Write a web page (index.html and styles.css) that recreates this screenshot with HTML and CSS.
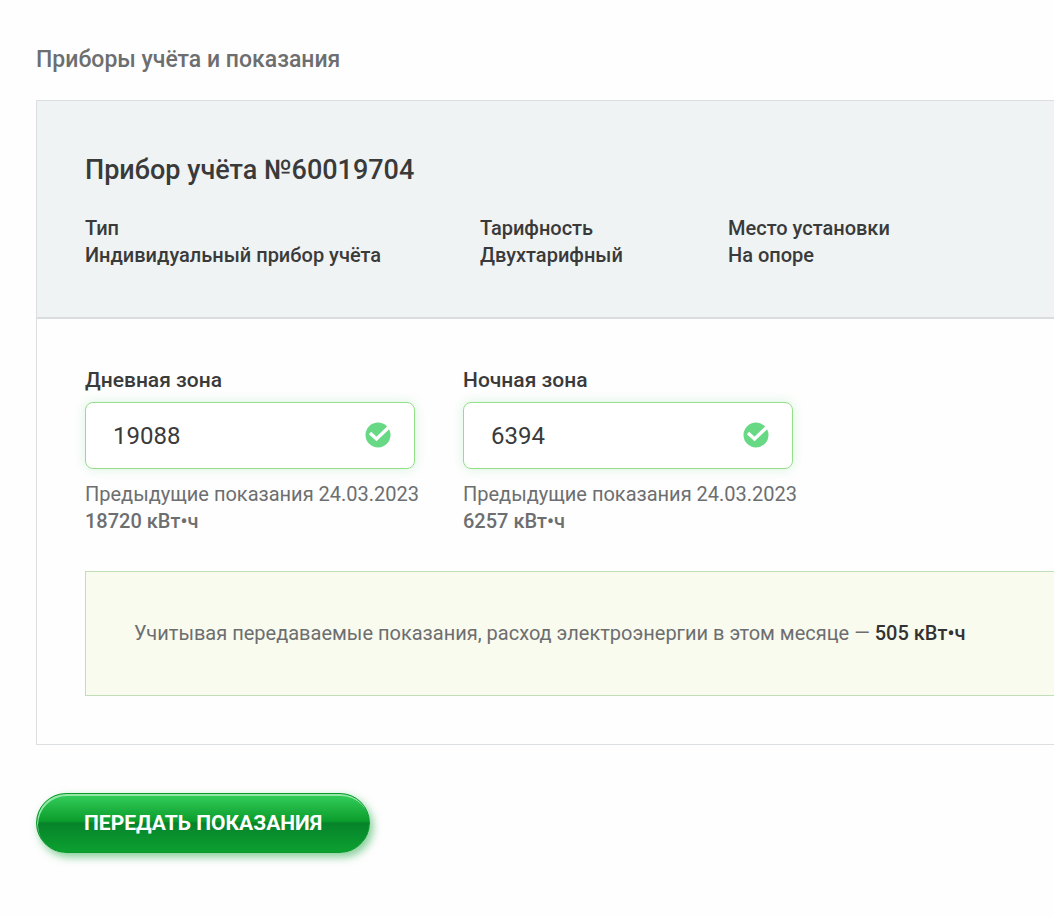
FILE: index.html
```html
<!DOCTYPE html>
<html lang="ru">
  <head>
    <meta charset="UTF-8" />
    <meta name="viewport" content="width=device-width, initial-scale=1.0" />
    <title>Приборы учёта и показания</title>
    <link rel="stylesheet" href="styles.css">
  </head>
  <body>
    <form class="readings-form">
      <h2 class="page-title">Приборы учёта и показания</h2>

      <section class="meter">
        <!-- Meter info -->
        <div class="meter-header">
          <h3 class="meter-title">Прибор учёта №60019704</h3>
          <dl class="meter-info">
            <div>
              <dt>Тип</dt>
              <dd>Индивидуальный прибор учёта</dd>
            </div>
            <div>
              <dt>Тарифность</dt>
              <dd>Двухтарифный</dd>
            </div>
            <div>
              <dt>Место установки</dt>
              <dd>На опоре</dd>
            </div>
          </dl>
        </div>

        <!-- Current readings -->
        <div class="meter-body">
          <div class="zones">
            <div class="zone">
              <label for="dayZone">Дневная зона</label>
              <div class="field">
                <input type="text" id="dayZone" inputmode="numeric" value="19088" />
                <svg class="check" viewBox="0 0 26 26" aria-hidden="true">
                  <circle cx="13" cy="13" r="12.5" fill="#67d985" />
                  <path d="M5 11L11.5 17L24 5" fill="none" stroke="#fff" stroke-width="3.4" />
                </svg>
              </div>
              <p class="previous">Предыдущие показания 24.03.2023</p>
              <p class="previous"><b>18720 кВт•ч</b></p>
            </div>
            <div class="zone">
              <label for="nightZone">Ночная зона</label>
              <div class="field">
                <input type="text" id="nightZone" inputmode="numeric" value="6394" />
                <svg class="check" viewBox="0 0 26 26" aria-hidden="true">
                  <circle cx="13" cy="13" r="12.5" fill="#67d985" />
                  <path d="M5 11L11.5 17L24 5" fill="none" stroke="#fff" stroke-width="3.4" />
                </svg>
              </div>
              <p class="previous">Предыдущие показания 24.03.2023</p>
              <p class="previous"><b>6257 кВт•ч</b></p>
            </div>
          </div>

          <p class="notice">Учитывая передаваемые показания, расход электроэнергии в этом месяце — <b>505 кВт•ч</b></p>
        </div>
      </section>

      <button type="button" class="submit-button">Передать показания</button>
    </form>
  </body>
</html>
```

FILE: styles.css
```css
* {
  box-sizing: border-box;
}

body {
  margin: 0;
  background-color: #fefefe;
  color: #3a3a3a;
  font-family: Roboto, Arial, sans-serif;
  font-size: 20px;
  line-height: 27px;
}

h2,
h3,
p,
dl,
dd {
  margin: 0;
}

b {
  font-weight: 500;
}

.readings-form {
  padding: 44px 0 62px 36px;
}

.page-title {
  margin-bottom: 24px;
  color: #6d6e70;
  font-size: 23px;
  font-weight: 500;
  line-height: 32px;
}

/* Meter card, runs to the right edge of the window */
.meter {
  margin-bottom: 48px;
  border: 1px solid #dcdfe1;
  border-right: none;
}

.meter-header {
  padding: 48px;
  background-color: #eff3f4;
  border-bottom: 2px solid #dadddf;
}

.meter-title {
  margin-bottom: 24px;
  font-size: 27px;
  font-weight: 500;
  line-height: 42px;
}

.meter-info {
  display: grid;
  grid-template-columns: 395px 248px auto;
  font-weight: 500;
}

.meter-body {
  padding: 48px 0 48px 48px;
}

/* Readings */
.zones {
  display: flex;
  gap: 48px;
  margin-bottom: 36px;
}

.zone {
  width: 330px;
}

.zone label {
  display: block;
  margin-bottom: 8px;
  font-size: 21px;
  font-weight: 500;
}

.field {
  position: relative;
  margin-bottom: 12px;
}

.field input {
  display: block;
  width: 100%;
  height: 67px;
  padding: 0 64px 0 27px;
  border: 1px solid #94e088;
  border-radius: 8px;
  background-color: #fff;
  box-shadow: 0 0 12px rgba(103, 217, 133, 0.25);
  color: #3a3a3a;
  font-family: inherit;
  font-size: 24px;
}

.check {
  position: absolute;
  top: 20px;
  right: 24px;
  width: 26px;
  height: 26px;
}

.previous {
  color: #6d6e70;
  white-space: nowrap;
}

.notice {
  padding: 48px;
  border: 1px solid #c0dfb8;
  border-right: none;
  background-color: #f9fbef;
  color: #6d6e70;
}

.notice b {
  color: #333;
}

.submit-button {
  height: 60px;
  padding: 0 47px;
  border: 1px solid #0a9a2c;
  border-radius: 30px;
  background: linear-gradient(#35cf5c, #0b9d2c 47%, #07832a 50%, #0ba030);
  box-shadow: 3px 4px 8px rgba(10, 160, 50, 0.5), inset 1px 2px 0 #93e6a6;
  color: #fff;
  font-family: inherit;
  font-size: 21px;
  font-weight: 700;
  text-transform: uppercase;
  cursor: pointer;
}
```
